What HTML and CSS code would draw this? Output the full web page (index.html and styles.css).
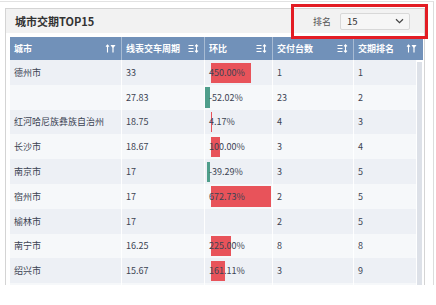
FILE: index.html
```html
<!DOCTYPE html>
<html lang="zh">
<head>
<meta charset="utf-8">
<link rel="stylesheet" href="styles.css">
</head>
<body>
<div class="frame">
  <div class="panel">
    <div class="titlebar">
      <div class="title">城市交期TOP15</div>
      <div class="filter">
        <span class="filter-label">排名</span>
        <div class="select">
          <span>15</span>
          <svg class="chev" width="9" height="6" viewBox="0 0 9 6"><path d="M1 1.2L4.5 4.6L8 1.2" fill="none" stroke="#444" stroke-width="1.2"/></svg>
        </div>
      </div>
    </div>
    <div class="tablewrap">
      <div class="thead">
        <div class="th"><span>城市</span><svg class="ico" width="11" height="9" viewBox="0 0 11 9"><path d="M2.5 8.5V1M1 2.6L2.5 1L4 2.6" fill="none" stroke="#fff" stroke-width="1.1"/><path d="M5.5 1H10.5L8.6 3.8V8.5H7.4V3.8Z" fill="#fff"/></svg></div>
        <div class="th"><span>线表交车周期</span><svg class="ico" width="11" height="9" viewBox="0 0 11 9"><path d="M0.5 1.5H5.5M0.5 4.5H5.5M0.5 7.5H5.5" stroke="#fff" stroke-width="1.1"/><path d="M8.5 0.8V8.2M7 2.3L8.5 0.8L10 2.3M7 6.7L8.5 8.2L10 6.7" fill="none" stroke="#fff" stroke-width="1.1"/></svg></div>
        <div class="th"><span>环比</span><svg class="ico" width="11" height="9" viewBox="0 0 11 9"><path d="M0.5 1.5H5.5M0.5 4.5H5.5M0.5 7.5H5.5" stroke="#fff" stroke-width="1.1"/><path d="M8.5 0.8V8.2M7 2.3L8.5 0.8L10 2.3M7 6.7L8.5 8.2L10 6.7" fill="none" stroke="#fff" stroke-width="1.1"/></svg></div>
        <div class="th"><span>交付台数</span><svg class="ico" width="11" height="9" viewBox="0 0 11 9"><path d="M0.5 1.5H5.5M0.5 4.5H5.5M0.5 7.5H5.5" stroke="#fff" stroke-width="1.1"/><path d="M8.5 0.8V8.2M7 2.3L8.5 0.8L10 2.3M7 6.7L8.5 8.2L10 6.7" fill="none" stroke="#fff" stroke-width="1.1"/></svg></div>
        <div class="th last"><span>交期排名</span><svg class="ico" width="11" height="9" viewBox="0 0 11 9"><path d="M2.5 8.5V1M1 2.6L2.5 1L4 2.6" fill="none" stroke="#fff" stroke-width="1.1"/><path d="M5.5 1H10.5L8.6 3.8V8.5H7.4V3.8Z" fill="#fff"/></svg></div>
      </div>
      <div class="tbody">
        <div class="rows">
          <div class="tr odd"><div class="td">德州市</div><div class="td">33</div><div class="td bar-cell"><i class="bar pos" style="width:40.1px"></i><span class="val">450.00%</span></div><div class="td">1</div><div class="td">1</div></div>
          <div class="tr even"><div class="td"></div><div class="td">27.83</div><div class="td bar-cell"><i class="bar neg" style="width:4.6px"></i><span class="val">-52.02%</span></div><div class="td">23</div><div class="td">2</div></div>
          <div class="tr odd"><div class="td">红河哈尼族彝族自治州</div><div class="td">18.75</div><div class="td bar-cell"><i class="bar pos" style="width:0.6px"></i><span class="val">4.17%</span></div><div class="td">4</div><div class="td">3</div></div>
          <div class="tr even"><div class="td">长沙市</div><div class="td">18.67</div><div class="td bar-cell"><i class="bar pos" style="width:8.9px"></i><span class="val">100.00%</span></div><div class="td">3</div><div class="td">4</div></div>
          <div class="tr odd"><div class="td">南京市</div><div class="td">17</div><div class="td bar-cell"><i class="bar neg" style="width:3.5px"></i><span class="val">-39.29%</span></div><div class="td">3</div><div class="td">5</div></div>
          <div class="tr even"><div class="td">宿州市</div><div class="td">17</div><div class="td bar-cell"><i class="bar pos" style="width:60px"></i><span class="val">672.73%</span></div><div class="td">2</div><div class="td">5</div></div>
          <div class="tr odd"><div class="td">榆林市</div><div class="td">17</div><div class="td bar-cell"></div><div class="td">2</div><div class="td">5</div></div>
          <div class="tr even"><div class="td">南宁市</div><div class="td">16.25</div><div class="td bar-cell"><i class="bar pos" style="width:20.1px"></i><span class="val">225.00%</span></div><div class="td">8</div><div class="td">8</div></div>
          <div class="tr odd"><div class="td">绍兴市</div><div class="td">15.67</div><div class="td bar-cell"><i class="bar pos" style="width:14.4px"></i><span class="val">161.11%</span></div><div class="td">3</div><div class="td">9</div></div>
          <div class="tr even"><div class="td"></div><div class="td"></div><div class="td bar-cell"><i class="bar neg" style="width:2px"></i></div><div class="td"></div><div class="td"></div></div>
        </div>
        <div class="scrollbar"></div>
      </div>
    </div>
  </div>
  <div class="highlight"></div>
</div>
</body>
</html>
```
FILE: styles.css
```css
* { box-sizing: border-box; }
html, body { margin: 0; padding: 0; background: #fff; }
body {
  font-family: "Noto Sans CJK SC", "Noto Sans", sans-serif;
  font-size: 9px;
  color: #3b4352;
}
.frame {
  position: relative;
  width: 434px;
  height: 284px;
  margin-top: 1px;
  border-top: 1px solid #e2e2e2;
  border-right: 1px solid #dcdcdc;
  padding-top: 6px;
  padding-left: 5px;
}
.panel {
  width: 420px;
  height: 277px;
  border: 1px solid #d4d4d4;
  border-bottom: none;
  overflow: hidden;
  background: #fff;
}
.titlebar {
  height: 24px;
  background: #f2f2f2;
  display: flex;
  align-items: center;
  justify-content: space-between;
  padding: 0 14px 0 9px;
}
.title {
  font-size: 11px;
  font-weight: 700;
  color: #333;
  line-height: 1;
}
.filter {
  display: flex;
  align-items: center;
  gap: 9px;
}
.filter-label { color: #555; font-size: 9px; }
.select {
  width: 70px;
  height: 17px;
  border: 1px solid #d8d8d8;
  border-radius: 2px;
  background: #f6f6f6;
  display: flex;
  align-items: center;
  justify-content: space-between;
  padding: 0 5px 0 6px;
  font-size: 9.5px;
  color: #333;
}
.chev { display: block; }
.tablewrap {
  padding: 4px 1px 0 4px;
}
.thead {
  display: grid;
  grid-template-columns: 112px 83px 68px 81px 68px;
  height: 23px;
  background: #7191b9;
}
.th {
  display: flex;
  align-items: center;
  justify-content: space-between;
  padding: 0 5px 0 4px;
  color: #fff;
  font-weight: 700;
  border-right: 1px solid rgba(255,255,255,0.38);
}
.th.last { border-right: none; }
.ico { display: block; flex: none; }
.tbody {
  display: flex;
}
.rows {
  width: 407px;
}
.tr {
  display: grid;
  grid-template-columns: 112px 83px 68px 81px 63px;
  height: 24.8px;
}
.tr.odd { background: #edf0f5; }
.tr.even { background: #f6f8fa; }
.td {
  display: flex;
  align-items: center;
  padding: 0 4px;
  white-space: nowrap;
  overflow: hidden;
  border-right: 1px solid rgba(255,255,255,0.9);
}
.bar-cell { position: relative; }
.bar {
  position: absolute;
  top: 2.5px;
  bottom: 2px;
}
.bar.pos { left: 6px; background: #e8535a; }
.bar.neg { right: 62px; background: #4f9e8b; }
.bar-cell .val { position: relative; }
.scrollbar {
  width: 5px;
  background: #dde1e8;
  margin-top: 2px;
}
.highlight {
  position: absolute;
  left: 291px;
  top: 2px;
  width: 137px;
  height: 35px;
  border: 3px solid #e31c24;
}
```
